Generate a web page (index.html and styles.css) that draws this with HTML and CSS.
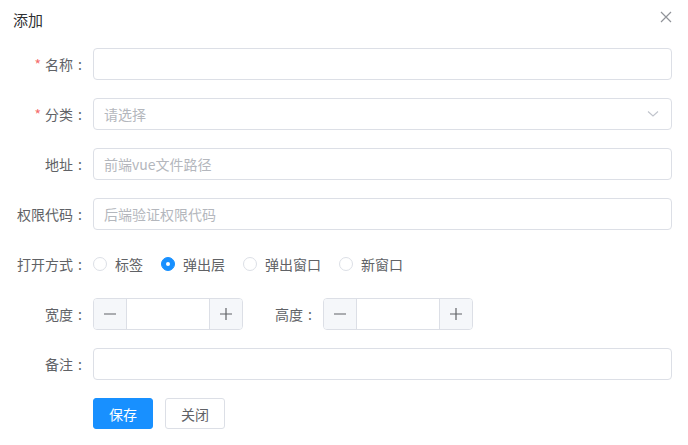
FILE: index.html
```html
<!DOCTYPE html>
<html lang="zh-CN">
<head>
  <meta charset="UTF-8" />
  <title>添加</title>
  <link rel="stylesheet" href="styles.css">
</head>
<body>
  <div class="dialog">
    <div class="dialog-header">
      <span class="dialog-title">添加</span>
      <button class="dialog-close" aria-label="关闭">
        <svg width="12" height="12" viewBox="0 0 12 12"><path d="M1 1L11 11M11 1L1 11" stroke="#909399" stroke-width="1.2" fill="none"/></svg>
      </button>
    </div>

    <form class="form">
      <div class="form-item">
        <label class="form-label required">名称<span class="colon">:</span></label>
        <div class="form-content">
          <input class="input" type="text" />
        </div>
      </div>

      <div class="form-item">
        <label class="form-label required">分类<span class="colon">:</span></label>
        <div class="form-content">
          <div class="select">
            <input class="input" type="text" placeholder="请选择" readonly />
            <svg class="select-arrow" width="12" height="8" viewBox="0 0 12 8"><path d="M1 1.5L6 6L11 1.5" stroke="#c0c4cc" stroke-width="1.1" fill="none"/></svg>
          </div>
        </div>
      </div>

      <div class="form-item">
        <label class="form-label">地址<span class="colon">:</span></label>
        <div class="form-content">
          <input class="input" type="text" placeholder="前端vue文件路径" />
        </div>
      </div>

      <div class="form-item">
        <label class="form-label">权限代码<span class="colon">:</span></label>
        <div class="form-content">
          <input class="input" type="text" placeholder="后端验证权限代码" />
        </div>
      </div>

      <div class="form-item">
        <label class="form-label">打开方式<span class="colon">:</span></label>
        <div class="form-content radios">
          <label class="radio"><span class="radio-dot"></span>标签</label>
          <label class="radio checked"><span class="radio-dot"></span>弹出层</label>
          <label class="radio"><span class="radio-dot"></span>弹出窗口</label>
          <label class="radio"><span class="radio-dot"></span>新窗口</label>
        </div>
      </div>

      <div class="form-item">
        <label class="form-label">宽度<span class="colon">:</span></label>
        <div class="number">
          <span class="number-btn minus">
            <svg width="12" height="12" viewBox="0 0 12 12"><path d="M0 6H12" stroke="#606266" stroke-width="1.2"/></svg>
          </span>
          <input class="number-input" type="text" />
          <span class="number-btn plus">
            <svg width="12" height="12" viewBox="0 0 12 12"><path d="M0 6H12M6 0V12" stroke="#606266" stroke-width="1.2"/></svg>
          </span>
        </div>
        <label class="form-label">高度<span class="colon">:</span></label>
        <div class="number">
          <span class="number-btn minus">
            <svg width="12" height="12" viewBox="0 0 12 12"><path d="M0 6H12" stroke="#606266" stroke-width="1.2"/></svg>
          </span>
          <input class="number-input" type="text" />
          <span class="number-btn plus">
            <svg width="12" height="12" viewBox="0 0 12 12"><path d="M0 6H12M6 0V12" stroke="#606266" stroke-width="1.2"/></svg>
          </span>
        </div>
      </div>

      <div class="form-item">
        <label class="form-label">备注<span class="colon">:</span></label>
        <div class="form-content">
          <input class="input" type="text" />
        </div>
      </div>

      <div class="form-item actions">
        <button type="button" class="btn btn-primary">保存</button>
        <button type="button" class="btn">关闭</button>
      </div>
    </form>
  </div>
</body>
</html>
```

FILE: styles.css
```css
body {
  margin: 0;
  font-family: "Noto Sans CJK SC", "Liberation Sans", sans-serif;
  font-size: 14px;
  color: #606266;
  background: #fff;
}

.dialog {
  width: 688px;
}

.dialog-header {
  display: flex;
  justify-content: space-between;
  align-items: center;
  padding: 10px 16px 0 13px;
  height: 20px;
}

.dialog-title {
  font-size: 15px;
  line-height: 20px;
  color: #303133;
}

.dialog-close {
  border: none;
  background: none;
  padding: 0;
  margin-top: -6px;
  width: 12px;
  height: 12px;
  display: flex;
  cursor: pointer;
}

.form {
  padding: 18px 16px 0 13px;
}

.form-item {
  display: flex;
  height: 32px;
  margin-bottom: 18px;
}

.form-label {
  width: 80px;
  flex: none;
  box-sizing: border-box;
  padding-right: 6px;
  text-align: right;
  line-height: 32px;
  font-size: 14px;
  color: #606266;
}

/* colon sits centred in a full-width cell */
.colon {
  display: inline-block;
  width: 14px;
  text-align: center;
}

.form-label.required::before {
  content: "*";
  color: #f56c6c;
  margin-right: 4px;
}

.form-content {
  flex: 1;
  display: flex;
  align-items: center;
}

.input {
  width: 100%;
  height: 32px;
  box-sizing: border-box;
  border: 1px solid #dcdfe6;
  border-radius: 4px;
  padding: 0 10px;
  font-family: inherit;
  font-size: 14px;
  color: #606266;
  outline: none;
}

.input::placeholder {
  color: #b4b7bd;
}

.select {
  position: relative;
  width: 100%;
}

.select-arrow {
  position: absolute;
  right: 13px;
  top: 12px;
}

.radios {
  gap: 18px;
}

.radio {
  display: flex;
  align-items: center;
  font-size: 14px;
  color: #606266;
  cursor: pointer;
}

.radio-dot {
  width: 14px;
  height: 14px;
  box-sizing: border-box;
  border: 1px solid #dcdfe6;
  border-radius: 50%;
  margin: 0 8px 0 0;
  display: flex;
  align-items: center;
  justify-content: center;
}

.radio.checked .radio-dot {
  background: #1890ff;
  border-color: #1890ff;
}

.radio.checked .radio-dot::after {
  content: "";
  width: 4px;
  height: 4px;
  border-radius: 50%;
  background: #fff;
}

.number {
  width: 150px;
  flex: none;
  display: flex;
  box-sizing: border-box;
  border: 1px solid #dcdfe6;
  border-radius: 4px;
  overflow: hidden;
}

.number-btn {
  width: 32px;
  flex: none;
  background: #f5f7fa;
  display: flex;
  align-items: center;
  justify-content: center;
}

.number-btn.minus {
  border-right: 1px solid #dcdfe6;
}

.number-btn.plus {
  border-left: 1px solid #dcdfe6;
}

.number-input {
  flex: 1;
  min-width: 0;
  border: none;
  outline: none;
  text-align: center;
  font-family: inherit;
  font-size: 14px;
}

.actions {
  padding-left: 80px;
  gap: 12px;
  height: 31px;
}

.btn {
  width: 60px;
  height: 31px;
  box-sizing: border-box;
  border: 1px solid #dcdfe6;
  border-radius: 3px;
  background: #fff;
  color: #606266;
  font-family: inherit;
  font-size: 14px;
  padding: 0;
  cursor: pointer;
}

.btn-primary {
  background: #1890ff;
  border-color: #1890ff;
  color: #fff;
}
```
